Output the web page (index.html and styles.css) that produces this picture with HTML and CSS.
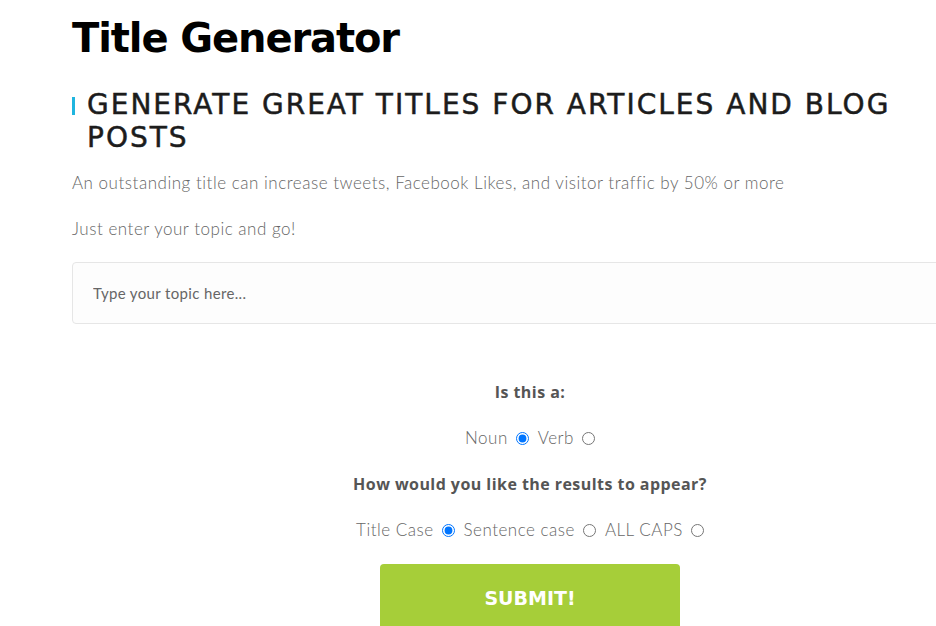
FILE: index.html
```html
<!DOCTYPE html>
<html lang="en">
<head>
<meta charset="utf-8">
<title>Title Generator</title>
<link rel="stylesheet" href="styles.css">
</head>
<body>
<div class="page">
  <main class="content">
    <h1 class="title">Title Generator</h1>
    <h2 class="subtitle">GENERATE GREAT TITLES FOR ARTICLES AND BLOG POSTS</h2>
    <p class="lead">An outstanding title can increase tweets, Facebook Likes, and visitor traffic by 50% or more</p>
    <p class="lead">Just enter your topic and go!</p>
    <form class="form">
      <input class="topic" type="text" placeholder="Type your topic here...">
      <div class="options">
        <p class="question">Is this a:</p>
        <div class="choices">
          <label class="choice">Noun <input type="radio" name="kind" checked></label>
          <label class="choice">Verb <input type="radio" name="kind"></label>
        </div>
        <p class="question">How would you like the results to appear?</p>
        <div class="choices">
          <label class="choice">Title Case <input type="radio" name="case" checked></label>
          <label class="choice">Sentence case <input type="radio" name="case"></label>
          <label class="choice">ALL CAPS <input type="radio" name="case"></label>
        </div>
        <button class="submit" type="button">SUBMIT!</button>
      </div>
    </form>
  </main>
</div>
</body>
</html>
```
FILE: styles.css
```css
html, body {
  margin: 0;
  padding: 0;
  background: #ffffff;
}
.page {
  width: 936px;
  height: 626px;
  overflow: hidden;
}
.content {
  width: 916px;
  padding: 12px 0 0 72px;
  font-family: "DejaVu Sans", sans-serif;
}
.title {
  margin: 0;
  font-size: 40px;
  line-height: 52px;
  font-weight: 700;
  color: #000;
  letter-spacing: -1.1px;
}
.subtitle {
  margin: 24px 0 0 0;
  padding-left: 15px;
  font-size: 28px;
  line-height: 33px;
  font-weight: 400;
  letter-spacing: 2px;
  color: #1c1c1c;
  -webkit-text-stroke: 0.5px #1c1c1c;
  position: relative;
}
.subtitle::before {
  content: "";
  position: absolute;
  left: 0;
  top: 9px;
  width: 3px;
  height: 18px;
  background: #1fb5df;
}
.lead {
  margin: 16px 0 0 0;
  font-family: "Lato", sans-serif;
  font-weight: 300;
  font-size: 17px;
  line-height: 26px;
  letter-spacing: 0.52px;
  color: #666;
}
.lead + .lead {
  margin-top: 20px;
}
.form {
  margin-top: 20px;
}
.topic {
  box-sizing: border-box;
  width: 916px;
  height: 62px;
  border: 1px solid #e6e6e6;
  border-radius: 4px;
  background: #fdfdfd;
  padding: 0 20px;
  font-family: "Lato", sans-serif;
  font-size: 15px;
  letter-spacing: 0.35px;
  color: #555;
  outline: none;
}
.topic::placeholder {
  color: #666;
}
.options {
  display: flex;
  flex-direction: column;
  align-items: center;
  padding-top: 56px;
}
.question {
  margin: 0;
  font-family: "Open Sans", sans-serif;
  font-weight: 700;
  font-size: 16px;
  line-height: 24px;
  letter-spacing: 0.45px;
  color: #555;
}
.choices {
  display: flex;
  gap: 9px;
  margin: 22px 0 22px 0;
  font-family: "Lato", sans-serif;
  font-weight: 300;
  font-size: 17px;
  line-height: 24px;
  letter-spacing: 0.5px;
  color: #666;
}
.choice {
  display: flex;
  align-items: center;
  gap: 0;
}
.choice input {
  margin: 1px 0 0 8px;
  width: 13px;
  height: 13px;
}
.submit {
  margin-top: 0;
  width: 300px;
  height: 70px;
  border: none;
  border-radius: 4px;
  background: #a6ce39;
  color: #fff;
  font-family: "DejaVu Sans", sans-serif;
  font-weight: 700;
  font-size: 19px;
  padding: 0 0 2px 0;
}
```
